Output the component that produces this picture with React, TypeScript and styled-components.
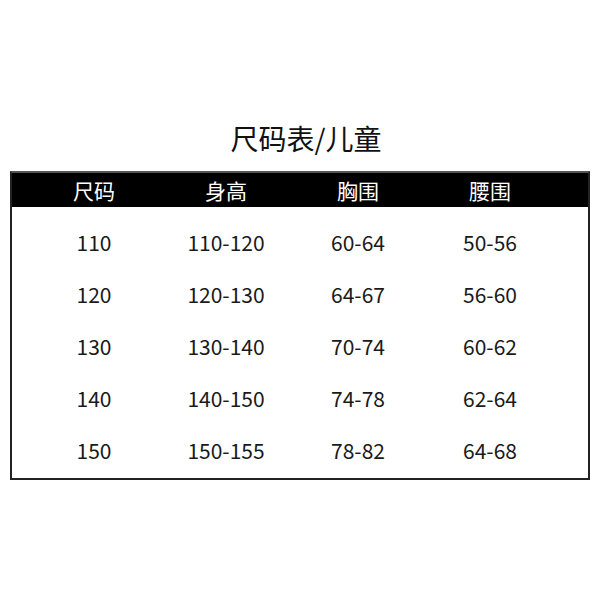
import styled, {createGlobalStyle} from "styled-components";

const GlobalStyle = createGlobalStyle`
  body {
    margin: 0;
    background: #ffffff;
    font-family: "Noto Sans CJK SC", "Noto Sans", sans-serif;
    color: #1a1a1a;
  }
`;

const Page = styled.div`
  width: 600px;
  height: 600px;
  padding: 120px 10px 0;
  box-sizing: border-box;
`;

const Title = styled.h1`
  margin: 0 0 15px;
  padding-left: 12px;
  font-size: 28px;
  line-height: 36px;
  font-weight: 400;
  text-align: center;
  color: #111;
`;

const Table = styled.div`
  border: 2px solid #222;
  border-top-color: #555;
  padding-bottom: 2px;
`;

const Row = styled.div<{ $head?: boolean }>`
  display: grid;
  grid-template-columns: repeat(4, 132px);
  padding-left: 16px;
  height: ${(p) => (p.$head ? "34px" : "52px")};
  align-items: center;
  background: ${(p) => (p.$head ? "#000" : "transparent")};
  color: ${(p) => (p.$head ? "#fff" : "#1a1a1a")};
  font-size: ${(p) => (p.$head ? "21px" : "21px")};
  margin-bottom: ${(p) => (p.$head ? "9px" : "0")};
`;

const Cell = styled.div`
  text-align: center;
  line-height: 1;
`;

const head = ["尺码", "身高", "胸围", "腰围"];
const rows = [
  ["110", "110-120", "60-64", "50-56"],
  ["120", "120-130", "64-67", "56-60"],
  ["130", "130-140", "70-74", "60-62"],
  ["140", "140-150", "74-78", "62-64"],
  ["150", "150-155", "78-82", "64-68"],
];

export default function App() {
  return (
    <>
      <GlobalStyle/>
      <Page>
        <Title>尺码表/儿童</Title>
        <Table>
          <Row $head>
            {head.map((h) => <Cell key={h}>{h}</Cell>)}
          </Row>
          {rows.map((r) => (
            <Row key={r[0]}>
              {r.map((c, i) => <Cell key={i}>{c}</Cell>)}
            </Row>
          ))}
        </Table>
      </Page>
    </>
  );
}
